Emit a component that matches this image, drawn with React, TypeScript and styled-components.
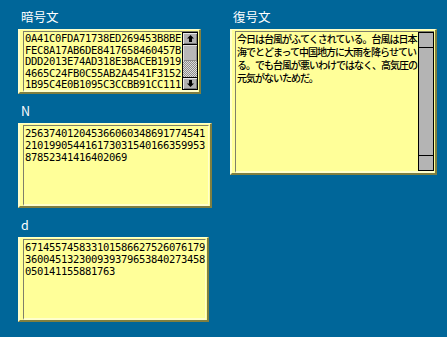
import React from 'react';
import styled, { createGlobalStyle } from 'styled-components';

const Global = createGlobalStyle`
  html, body { margin: 0; padding: 0; background: #006699; }
  body { width: 447px; height: 337px; overflow: hidden; }
`;

const Page = styled.div`
  box-sizing: border-box;
  width: 447px;
  height: 337px;
  display: flex;
  gap: 18px;
  padding: 8px 0 0 18px;
  background: #006699;
`;

const Column = styled.div<{ $w: number }>`
  display: flex;
  flex-direction: column;
  gap: 8px;
  width: ${(p) => p.$w}px;
`;

const Section = styled.section`
  display: flex;
  flex-direction: column;
  gap: 4px;
`;

const Label = styled.div`
  color: #ffffff;
  font-family: "Noto Sans CJK JP", sans-serif;
  font-size: 12.5px;
  line-height: 17px;
  padding-left: 3px;
`;

const Frame = styled.div<{ $w: number; $h: number }>`
  box-sizing: border-box;
  width: ${(p) => p.$w}px;
  height: ${(p) => p.$h}px;
  display: flex;
  background: #ffff99;
  border-style: solid;
  border-width: 1px 2px 2px 2px;
  border-color: #ffffcc #807f40 #807f40 #ffffcc;
  padding: 1px 1px 0 3px;
`;

const Field = styled.div<{ $scroll?: boolean }>`
  flex: 1;
  min-width: 0;
  display: flex;
  border-style: solid;
  border-width: 1px ${(p) => (p.$scroll ? 0 : 1)}px 2px 1px;
  border-color: #7f7f6a #ffffcc #ffffcc #7f7f6a;
`;

const MonoText = styled.div<{ $lh: number }>`
  flex: 1;
  min-width: 0;
  overflow: hidden;
  white-space: pre;
  padding: 1px 0 0 1px;
  color: #000;
  font-family: "DejaVu Sans Mono", monospace;
  font-size: 10.5px;
  letter-spacing: -0.32px;
  line-height: ${(p) => p.$lh}px;
`;

const JpText = styled.div`
  flex: 1;
  min-width: 0;
  overflow: hidden;
  white-space: pre;
  padding: 0 0 0 1px;
  color: #000;
  font-family: "Noto Sans CJK JP", sans-serif;
  font-size: 10px;
  font-weight: 500;
  letter-spacing: -1px;
  line-height: 13px;
`;

const Scroll = styled.div`
  box-sizing: border-box;
  width: 16px;
  flex-shrink: 0;
  display: flex;
  flex-direction: column;
  border: 1px solid #000;
  background: #b4b4b4;
`;

const ArrowButton = styled.div<{ $h: number; $side: 'top' | 'bottom' }>`
  height: ${(p) => p.$h}px;
  flex-shrink: 0;
  display: flex;
  align-items: center;
  justify-content: center;
  background: #b0b0b0;
  box-shadow: inset 1px 1px 0 #e8e8e8, inset -1px -1px 0 #7a7a7a;
  border-${(p) => (p.$side === 'top' ? 'bottom' : 'top')}: 1px solid #000;
`;

const Thumb = styled.div`
  height: 16px;
  flex-shrink: 0;
  background: #b8b8b8;
  box-shadow: inset 1px 1px 0 #e0e0e0, inset -1px -1px 0 #8a8a8a;
`;

const Track = styled.div`
  flex: 1;
  background: repeating-conic-gradient(#8c8c8c 0 25%, #dcdcdc 0 50%) 0 0 / 2px 2px;
`;

const BlankButton = styled.div<{ $side: 'top' | 'bottom' }>`
  height: 14px;
  flex-shrink: 0;
  border-${(p) => (p.$side === 'top' ? 'bottom' : 'top')}: 1px solid #000;
`;

const BlankTrack = styled.div`
  flex: 1;
`;

const Arrow = ({ down }: { down?: boolean }) => (
  <svg width="7" height="7" viewBox="0 0 7 7" style={down ? { transform: 'rotate(180deg)' } : undefined}>
    <polygon points="3.5,0 7,3.5 5,3.5 5,7 2,7 2,3.5 0,3.5" fill="#000" />
  </svg>
);

const cipher = [
  '0A41C0FDA71738ED269453B8BE',
  'FEC8A17AB6DE8417658460457B',
  'DDD2013E74AD318E3BACEB1919',
  '4665C24FB0C55AB2A4541F3152',
  '1B95C4E0B1095C3CCBB91CC111',
].join('\n');

const nValue = [
  '256374012045366060348691774541',
  '210199054416173031540166359953',
  '87852341416402069',
].join('\n');

const dValue = [
  '671455745833101586627526076179',
  '360045132300939379653840273458',
  '050141155881763',
].join('\n');

const plain = [
  '今日は台風がふてくされている。台風は日本',
  '海でとどまって中国地方に大雨を降らせてい',
  'る。でも台風が悪いわけではなく、高気圧の',
  '元気がないためだ。',
].join('\n');

export default function App() {
  return (
    <>
      <Global />
      <Page>
        <Column $w={194}>
          <Section>
            <Label>暗号文</Label>
            <Frame $w={183} $h={65}>
              <Field $scroll>
                <MonoText $lh={11.5}>{cipher}</MonoText>
                <Scroll>
                  <ArrowButton $h={11} $side="top">
                    <Arrow />
                  </ArrowButton>
                  <Thumb />
                  <Track />
                  <ArrowButton $h={11} $side="bottom">
                    <Arrow down />
                  </ArrowButton>
                </Scroll>
              </Field>
            </Frame>
          </Section>
          <Section>
            <Label>N</Label>
            <Frame $w={194} $h={85}>
              <Field>
                <MonoText $lh={12}>{nValue}</MonoText>
              </Field>
            </Frame>
          </Section>
          <Section>
            <Label>d</Label>
            <Frame $w={191} $h={85}>
              <Field>
                <MonoText $lh={12}>{dValue}</MonoText>
              </Field>
            </Frame>
          </Section>
        </Column>
        <Column $w={207}>
          <Section>
            <Label>復号文</Label>
            <Frame $w={207} $h={146}>
              <Field $scroll>
                <JpText>{plain}</JpText>
                <Scroll>
                  <BlankButton $side="top" />
                  <BlankTrack />
                  <BlankButton $side="bottom" />
                </Scroll>
              </Field>
            </Frame>
          </Section>
        </Column>
      </Page>
    </>
  );
}
